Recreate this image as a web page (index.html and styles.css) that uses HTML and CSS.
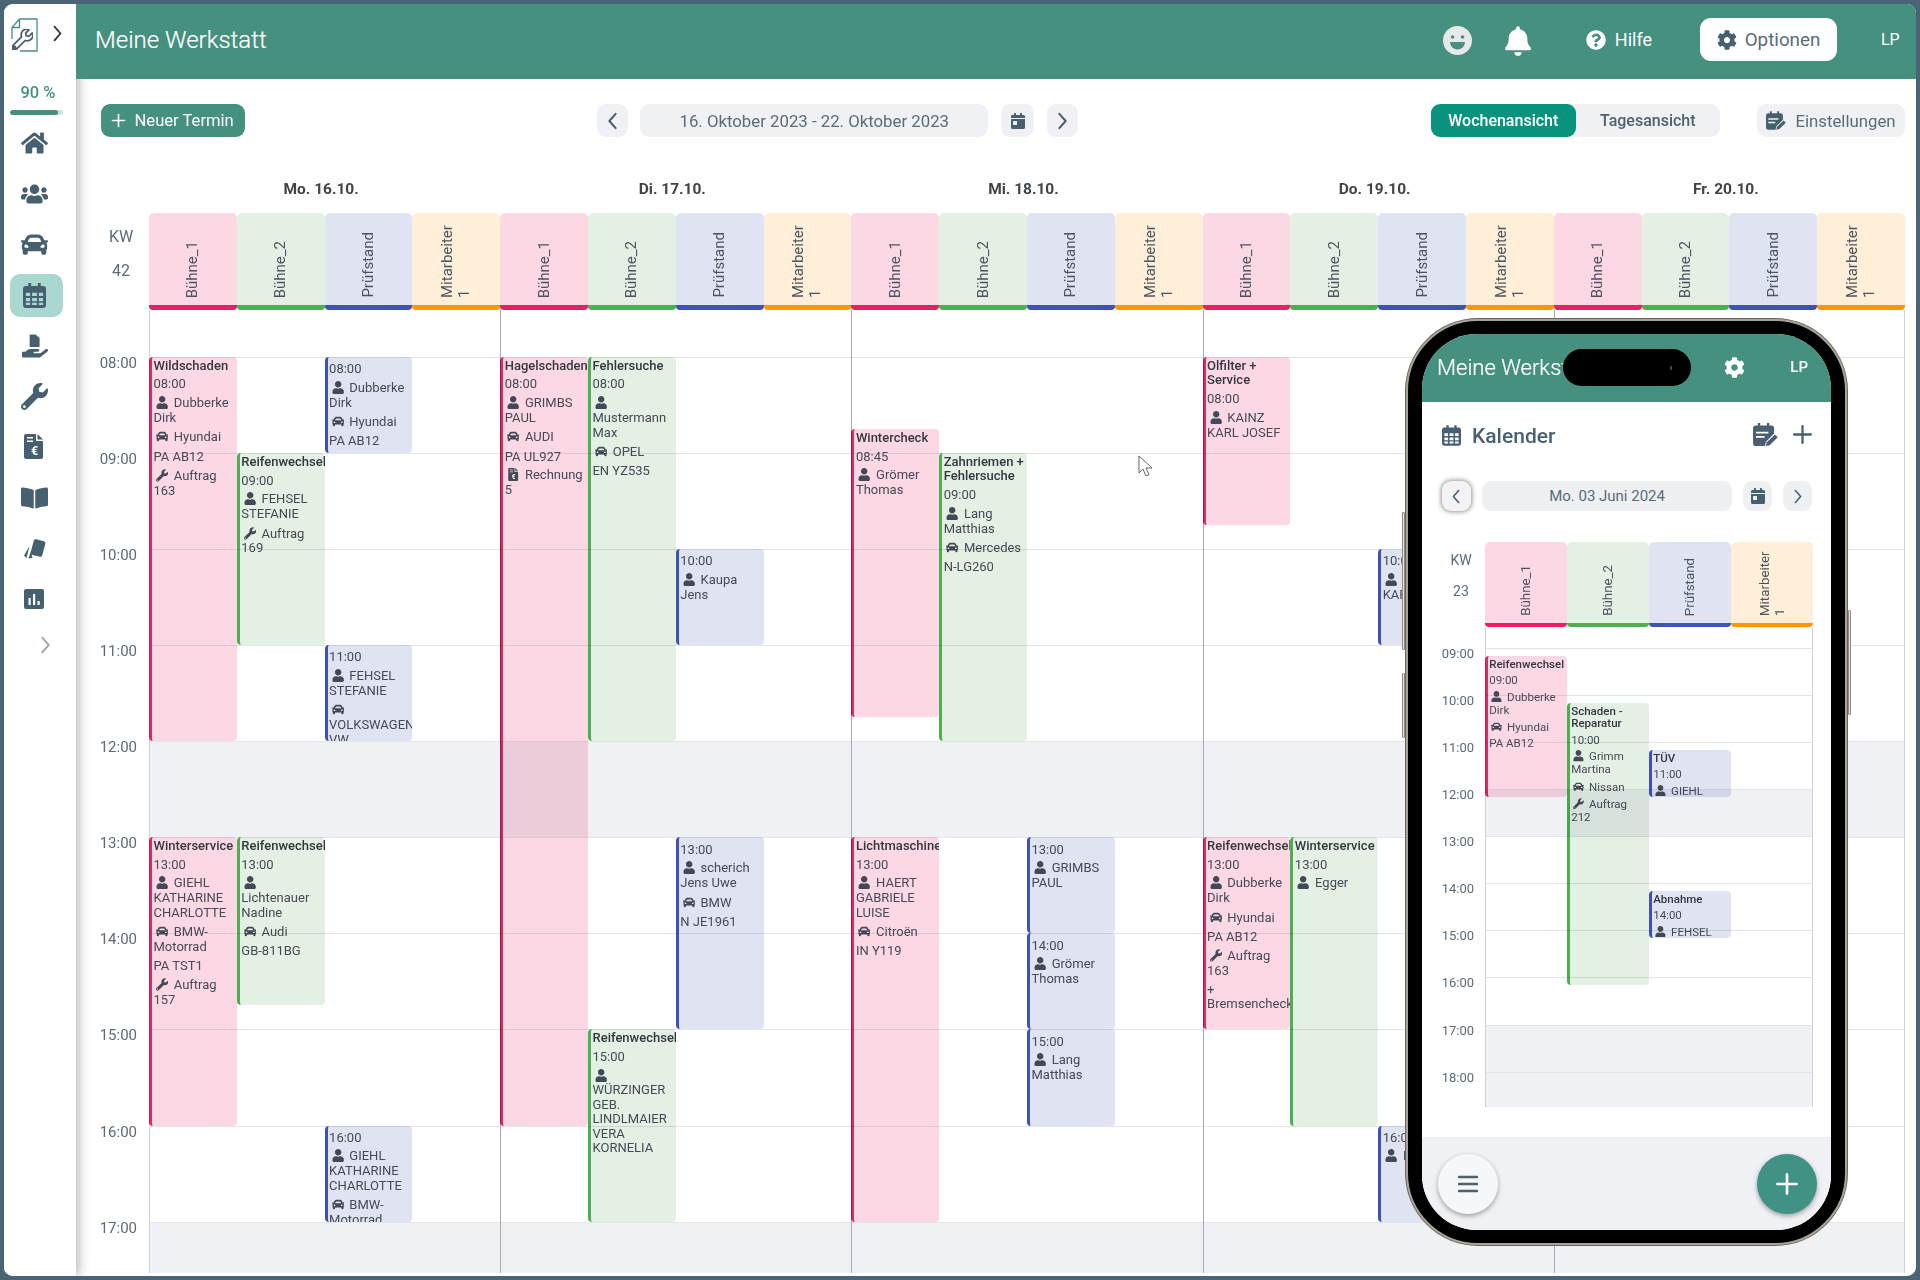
FILE: index.html
```html
<!DOCTYPE html>
<html lang="de">
<head>
<meta charset="utf-8">
<title>Meine Werkstatt</title>
<link rel="stylesheet" href="styles.css">
</head>
<body>
<svg class="sprite" aria-hidden="true">
  <symbol id="user" viewBox="0 0 448 512"><path d="M224 256c70.700 0 128-57.300 128-128S294.700 0 224 0 96 57.300 96 128s57.300 128 128 128zm89.600 32h-16.700c-22.200 10.200-46.900 16-72.900 16s-50.600-5.800-72.900-16h-16.700C60.200 288 0 348.200 0 422.400V464c0 26.500 21.500 48 48 48h352c26.500 0 48-21.500 48-48v-41.600c0-74.200-60.200-134.400-134.400-134.400z"/></symbol>
  <symbol id="car" viewBox="0 0 512 512"><path d="M499.990 176h-59.870l-16.640-41.600C406.380 91.630 365.570 64 319.500 64h-127c-46.060 0-86.880 27.630-103.990 70.400L71.870 176H12.010C4.200 176-1.530 183.340.37 190.910l6 24C7.700 220.250 12.500 224 18.010 224h20.070C24.650 235.730 16 252.780 16 272v48c0 16.120 6.160 30.670 16 41.930V416c0 17.670 14.330 32 32 32h32c17.670 0 32-14.330 32-32v-32h256v32c0 17.670 14.330 32 32 32h32c17.670 0 32-14.330 32-32v-54.070c9.840-11.250 16-25.800 16-41.930v-48c0-19.220-8.650-36.270-22.070-48H494c5.510 0 10.310-3.750 11.640-9.090l6-24c1.890-7.570-3.840-14.910-11.650-14.910zm-352.060-17.830c7.290-18.220 24.940-30.170 44.570-30.170h127c19.630 0 37.280 11.950 44.570 30.170L384 208H128l19.930-49.830zM96 319.800c-19.200 0-32-12.760-32-31.900S76.800 256 96 256s48 28.710 48 47.850-28.800 15.950-48 15.950zm320 0c-19.200 0-48 3.190-48-15.950S396.800 256 416 256s32 12.760 32 31.900-12.800 31.900-32 31.900z"/></symbol>
  <symbol id="wrench" viewBox="0 0 512 512"><path d="M507.730 109.100c-2.240-9.030-13.540-12.090-20.120-5.510l-74.360 74.360-67.880-11.310-11.310-67.880 74.360-74.360c6.620-6.620 3.430-17.900-5.660-20.160-47.380-11.740-99.550.91-136.580 37.930-39.640 39.640-50.550 97.100-34.050 147.200L18.740 402.760c-24.990 24.990-24.990 65.510 0 90.500 24.990 24.990 65.510 24.990 90.500 0l213.210-213.210c50.120 16.710 107.470 5.680 147.370-34.220 37.070-37.070 49.700-89.320 37.910-136.730zM64 472c-13.250 0-24-10.750-24-24 0-13.260 10.750-24 24-24s24 10.740 24 24c0 13.250-10.750 24-24 24z"/></symbol>
  <symbol id="home" viewBox="0 0 576 512"><path d="M280.370 148.260L96 300.110V464a16 16 0 0 0 16 16l112.060-.29a16 16 0 0 0 15.920-16V368a16 16 0 0 1 16-16h64a16 16 0 0 1 16 16v95.640a16 16 0 0 0 16 16.050L464 480a16 16 0 0 0 16-16V300L295.670 148.260a12.190 12.190 0 0 0-15.300 0zM571.600 251.470L488 182.560V44.050a12 12 0 0 0-12-12h-56a12 12 0 0 0-12 12v72.610L318.470 43a48 48 0 0 0-61 0L4.340 251.470a12 12 0 0 0-1.600 16.900l25.500 31A12 12 0 0 0 45.150 301l235.220-193.740a12.190 12.190 0 0 1 15.300 0L530.900 301a12 12 0 0 0 16.900-1.600l25.500-31a12 12 0 0 0-1.700-16.930z"/></symbol>
  <symbol id="users" viewBox="0 0 640 512"><path d="M96 224c35.300 0 64-28.700 64-64s-28.700-64-64-64-64 28.700-64 64 28.700 64 64 64zm448 0c35.300 0 64-28.700 64-64s-28.700-64-64-64-64 28.700-64 64 28.700 64 64 64zm32 32h-64c-17.600 0-33.500 7.100-45.100 18.600 40.300 22.100 68.900 62 75.100 109.400h66c17.700 0 32-14.300 32-32v-32c0-35.300-28.700-64-64-64zm-256 0c61.900 0 112-50.100 112-112S381.900 32 320 32 208 82.100 208 144s50.100 112 112 112zm76.800 32h-8.300c-20.800 10-43.900 16-68.500 16s-47.600-6-68.500-16h-8.300C179.600 288 128 339.600 128 403.200V432c0 26.500 21.500 48 48 48h288c26.500 0 48-21.500 48-48v-28.800c0-63.600-51.600-115.200-115.200-115.200zm-223.700-13.400C161.500 263.100 145.600 256 128 256H64c-35.300 0-64 28.700-64 64v32c0 17.700 14.300 32 32 32h65.900c6.300-47.400 34.900-87.300 75.200-109.400z"/></symbol>
  <symbol id="calendar" viewBox="0 0 24 26"><path fill-rule="evenodd" d="M5.500 0h3v3h7V0h3v3H21a3 3 0 0 1 3 3v17a3 3 0 0 1-3 3H3a3 3 0 0 1-3-3V6a3 3 0 0 1 3-3h2.500zM3 10v3.500h4.500V10zm6.500 0v3.500h5V10zm7 0v3.500H21V10zM3 15.500V19h4.500v-3.500zm6.500 0V19h5v-3.500zm7 0V19H21v-3.500zM3 20.500V23h4.500v-2.500zm6.500 0V23h5v-2.500zm7 0V23H21v-2.500z"/></symbol>
  <symbol id="calday" viewBox="0 0 448 512"><path d="M0 464c0 26.500 21.500 48 48 48h352c26.500 0 48-21.500 48-48V192H0v272zm64-192c0-8.800 7.200-16 16-16h96c8.800 0 16 7.200 16 16v96c0 8.800-7.200 16-16 16H80c-8.800 0-16-7.200-16-16v-96zM400 64h-48V16c0-8.800-7.200-16-16-16h-32c-8.800 0-16 7.200-16 16v48H160V16c0-8.800-7.200-16-16-16h-32c-8.800 0-16 7.200-16 16v48H48C21.500 64 0 85.500 0 112v48h448v-48c0-26.500-21.500-48-48-48z"/></symbol>
  <symbol id="calpen" viewBox="0 0 26 24"><path fill-rule="evenodd" d="M5 0h2.500v2.500h7V0H17v2.500h2a3 3 0 0 1 3 3V11l-8.500 8.500L12.300 24H3a3 3 0 0 1-3-3V5.500a3 3 0 0 1 3-3h2zM3 9v2h13V9zm0 4.500v2h9v-2z"/><path d="M23 12l2.800 2.800-8.500 8.300-4 .9 1-4z"/></symbol>
  <symbol id="hand" viewBox="0 0 576 512"><path d="M565.300 328.100c-11.800-10.700-30.200-10-42.600 0L430.300 402c-11.300 9.100-25.400 14-40 14H272c-8.800 0-16-7.200-16-16s7.200-16 16-16h78.300c15.900 0 30.700-10.900 33.300-26.600 3.300-20-12.100-37.400-31.600-37.400H192c-27 0-53.100 9.300-74.100 26.300L71.400 384H16c-8.800 0-16 7.200-16 16v96c0 8.800 7.200 16 16 16h356.800c14.500 0 28.600-4.900 40-14L564 377c15.200-12.100 16.400-35.300 1.300-48.900z"/><path d="M190 0h110l90 80v180a20 20 0 0 1-20 20H190a20 20 0 0 1-20-20V20a20 20 0 0 1 20-20z"/></symbol>
  <symbol id="invoice" viewBox="0 0 19 25"><path fill-rule="evenodd" d="M2 0h10v7h7v16a2 2 0 0 1-2 2H2a2 2 0 0 1-2-2V2a2 2 0 0 1 2-2zm1 3v1.500h6V3zm0 3.500V8h6V6.500z"/><path d="M13.500 0L19 5.500h-5.500z"/><text x="10.500" y="20.500" font-size="12.500" font-weight="700" fill="#fff" text-anchor="middle" font-family="Roboto, sans-serif">€</text></symbol>
  <symbol id="book" viewBox="0 0 576 512"><path d="M542.220 32.050c-54.800 3.110-163.720 14.430-230.960 55.590-4.640 2.840-7.270 7.890-7.270 13.170v363.870c0 11.550 12.630 18.850 23.280 13.490 69.180-34.820 169.230-44.320 218.700-46.920 16.890-.89 30.020-14.430 30.020-30.660V62.750c.01-17.710-15.350-31.740-33.770-30.700zM264.730 87.640C197.500 46.480 88.580 35.170 33.780 32.050 15.360 31.010 0 45.040 0 62.750V400.600c0 16.240 13.130 29.780 30.020 30.660 49.490 2.600 149.590 12.110 218.770 46.950 10.620 5.350 23.210-1.940 23.210-13.460V100.630c0-5.290-2.620-10.140-7.270-12.990z"/></symbol>
  <symbol id="tags" viewBox="0 0 24 22"><rect x="9" y="2" width="12" height="16" rx="2" transform="rotate(15 15 10)"/><path d="M6.500 8L1 17.500l2.500 2.500zM8 13l-2.500 7.500 4-.5z"/></symbol>
  <symbol id="chart" viewBox="0 0 20 20"><path fill-rule="evenodd" d="M2 0h16a2 2 0 0 1 2 2v16a2 2 0 0 1-2 2H2a2 2 0 0 1-2-2V2a2 2 0 0 1 2-2zm2.500 9v7h2.200V9zM9 5v11h2.200V5zm4.500 7v4h2.200v-4z"/></symbol>
  <symbol id="gear" viewBox="0 0 512 512"><path d="M487.400 315.700l-42.600-24.600c4.300-23.200 4.300-47 0-70.200l42.600-24.600c4.900-2.800 7.100-8.600 5.500-14-11.100-35.600-30-67.800-54.700-94.600-3.800-4.100-10-5.100-14.800-2.300L380.800 110c-17.900-15.400-38.500-27.300-60.800-35.100V25.800c0-5.600-3.900-10.500-9.400-11.700-36.700-8.200-74.300-7.800-109.200 0-5.500 1.200-9.400 6.100-9.400 11.700V75c-22.200 7.900-42.800 19.800-60.800 35.100L88.700 85.500c-4.900-2.800-11-1.900-14.800 2.300-24.700 26.700-43.600 58.900-54.700 94.600-1.700 5.400.6 11.200 5.500 14L67.300 221c-4.300 23.200-4.300 47 0 70.200l-42.600 24.600c-4.900 2.800-7.100 8.600-5.500 14 11.100 35.600 30 67.800 54.700 94.600 3.800 4.100 10 5.100 14.800 2.300l42.600-24.600c17.900 15.400 38.500 27.300 60.800 35.100v49.200c0 5.600 3.900 10.500 9.400 11.700 36.700 8.200 74.300 7.800 109.200 0 5.500-1.200 9.400-6.100 9.400-11.700v-49.200c22.200-7.900 42.800-19.800 60.800-35.100l42.600 24.600c4.900 2.800 11 1.900 14.800-2.300 24.700-26.700 43.600-58.900 54.700-94.600 1.500-5.500-.7-11.300-5.600-14.100zM256 336c-44.100 0-80-35.900-80-80s35.900-80 80-80 80 35.900 80 80-35.900 80-80 80z"/></symbol>
  <symbol id="bell" viewBox="0 0 448 512"><path d="M224 512c35.320 0 63.970-28.650 63.970-64H160.030c0 35.350 28.650 64 63.970 64zm215.390-149.710c-19.320-20.760-55.470-51.990-55.470-154.290 0-77.700-54.480-139.900-127.940-155.160V32c0-17.670-14.320-32-31.980-32s-31.980 14.330-31.980 32v20.840C118.560 68.100 64.080 130.300 64.080 208c0 102.300-36.150 133.530-55.470 154.290-6 6.450-8.660 14.160-8.610 21.710.11 16.400 12.980 32 32.100 32h383.800c19.120 0 32-15.600 32.100-32 .05-7.550-2.610-15.270-8.610-21.710z"/></symbol>
  <symbol id="help" viewBox="0 0 512 512"><path d="M504 256c0 136.997-111.043 248-248 248S8 392.997 8 256C8 119.083 119.043 8 256 8s248 111.083 248 248zM262.655 90c-54.497 0-89.255 22.957-116.549 63.758-3.536 5.286-2.353 12.415 2.715 16.258l34.699 26.310c5.205 3.947 12.621 3.008 16.665-2.122 17.864-22.658 30.113-35.797 57.303-35.797 20.429 0 45.698 13.148 45.698 32.958 0 14.976-12.363 22.667-32.534 33.976C247.128 238.528 216 254.941 216 296v4c0 6.627 5.373 12 12 12h56c6.627 0 12-5.373 12-12v-1.333c0-28.462 83.186-29.647 83.186-106.667 0-58.002-60.165-102-116.531-102zM256 338c-25.365 0-46 20.635-46 46 0 25.364 20.635 46 46 46s46-20.636 46-46c0-25.365-20.635-46-46-46z"/></symbol>
  <symbol id="left" viewBox="0 0 12 20"><path d="M9.500 2L2.500 10l7 8" fill="none" stroke="currentColor" stroke-width="2.200" stroke-linecap="round" stroke-linejoin="round"/></symbol>
  <symbol id="right" viewBox="0 0 12 20"><path d="M2.500 2l7 8-7 8" fill="none" stroke="currentColor" stroke-width="2.200" stroke-linecap="round" stroke-linejoin="round"/></symbol>
  <symbol id="plus" viewBox="0 0 20 20"><path d="M10 2v16M2 10h16" fill="none" stroke="currentColor" stroke-width="2.200" stroke-linecap="round"/></symbol>
</svg>

<div class="app">
  <aside class="sidebar">
    <div class="brand">
      <svg class="logo" viewBox="0 0 27 34">
        <path d="M8.500 1H26v32H9M8.500 1L1 9.500V21M8.500 1v8.500H1" fill="none" stroke="#45907f" stroke-width="1.300"/>
        <use href="#wrench" x="1" y="11" width="21" height="21" class="logo-wrench"/>
      </svg>
      <svg class="brand-chev"><use href="#right"/></svg>
    </div>
    <div class="progress-label">90 %</div>
    <div class="progress"><div class="progress-fill"></div></div>
    <nav class="side-nav">
      <a class="side-item"><svg class="s-home"><use href="#home"/></svg></a>
      <a class="side-item"><svg class="s-users"><use href="#users"/></svg></a>
      <a class="side-item"><svg class="s-car"><use href="#car"/></svg></a>
      <a class="side-item active"><svg class="s-cal"><use href="#calendar"/></svg></a>
      <a class="side-item"><svg class="s-hand"><use href="#hand"/></svg></a>
      <a class="side-item"><svg class="s-wrench"><use href="#wrench"/></svg></a>
      <a class="side-item"><svg class="s-invoice"><use href="#invoice"/></svg></a>
      <a class="side-item"><svg class="s-book"><use href="#book"/></svg></a>
      <a class="side-item"><svg class="s-tags"><use href="#tags"/></svg></a>
      <a class="side-item"><svg class="s-chart"><use href="#chart"/></svg></a>
      <a class="side-item side-more"><svg class="s-more"><use href="#right"/></svg></a>
    </nav>
  </aside>

  <main class="main">
    <header class="topbar">
      <h1 class="title">Meine Werkstatt</h1>
      <svg class="smiley" viewBox="0 0 29 29">
        <circle cx="14.500" cy="14.500" r="14.500" fill="#e6e8ea"/>
        <circle cx="9.500" cy="11" r="1.800" fill="#45907f"/>
        <circle cx="19.500" cy="11" r="1.800" fill="#45907f"/>
        <path d="M7 16h15a7.500 7.500 0 0 1-15 0z" fill="#45907f"/>
      </svg>
      <svg class="bell"><use href="#bell"/></svg>
      <a class="help"><svg class="help-ic"><use href="#help"/></svg>Hilfe</a>
      <button class="options"><svg class="options-ic"><use href="#gear"/></svg>Optionen</button>
      <span class="initials">LP</span>
    </header>

    <div class="content">
      <div class="toolbar">
        <button class="btn-new"><svg class="plus-ic"><use href="#plus"/></svg>Neuer Termin</button>
        <div class="range">
          <button class="tool-btn nav"><svg class="chev"><use href="#left"/></svg></button>
          <div class="tool-btn date">16. Oktober 2023 - 22. Oktober 2023</div>
          <button class="tool-btn cal"><svg class="cal-ic"><use href="#calday"/></svg></button>
          <button class="tool-btn nav"><svg class="chev"><use href="#right"/></svg></button>
        </div>
        <div class="views">
          <div class="toggle">
            <button class="toggle-item on">Wochenansicht</button>
            <button class="toggle-item">Tagesansicht</button>
          </div>
          <button class="tool-btn settings"><svg class="pen-ic"><use href="#calpen"/></svg>Einstellungen</button>
        </div>
      </div>

      <div class="days">
        <div>Mo. 16.10.</div><div>Di. 17.10.</div><div>Mi. 18.10.</div><div>Do. 19.10.</div><div>Fr. 20.10.</div>
      </div>

      <div class="res-row">
        <div class="kw"><span>KW</span><span>42</span></div>
        <div class="res pink"><span>Bühne_1</span></div><div class="res green"><span>Bühne_2</span></div><div class="res blue"><span>Prüfstand</span></div><div class="res orange"><span>Mitarbeiter 1</span></div>
        <div class="res pink"><span>Bühne_1</span></div><div class="res green"><span>Bühne_2</span></div><div class="res blue"><span>Prüfstand</span></div><div class="res orange"><span>Mitarbeiter 1</span></div>
        <div class="res pink"><span>Bühne_1</span></div><div class="res green"><span>Bühne_2</span></div><div class="res blue"><span>Prüfstand</span></div><div class="res orange"><span>Mitarbeiter 1</span></div>
        <div class="res pink"><span>Bühne_1</span></div><div class="res green"><span>Bühne_2</span></div><div class="res blue"><span>Prüfstand</span></div><div class="res orange"><span>Mitarbeiter 1</span></div>
        <div class="res pink"><span>Bühne_1</span></div><div class="res green"><span>Bühne_2</span></div><div class="res blue"><span>Prüfstand</span></div><div class="res orange"><span>Mitarbeiter 1</span></div>
      </div>

      <div class="week">
        <div class="band" style="grid-row:18/22"></div>
        <div class="band" style="grid-row:38/39"></div>
        <div class="hour" style="grid-row:2"><span>08:00</span><i></i></div>
        <div class="hour" style="grid-row:6"><span>09:00</span><i></i></div>
        <div class="hour" style="grid-row:10"><span>10:00</span><i></i></div>
        <div class="hour" style="grid-row:14"><span>11:00</span><i></i></div>
        <div class="hour" style="grid-row:18"><span>12:00</span><i></i></div>
        <div class="hour" style="grid-row:22"><span>13:00</span><i></i></div>
        <div class="hour" style="grid-row:26"><span>14:00</span><i></i></div>
        <div class="hour" style="grid-row:30"><span>15:00</span><i></i></div>
        <div class="hour" style="grid-row:34"><span>16:00</span><i></i></div>
        <div class="hour" style="grid-row:38"><span>17:00</span><i></i></div>
        <div class="vline edge" style="grid-column:2"></div>
        <div class="vline" style="grid-column:6"></div>
        <div class="vline" style="grid-column:10"></div>
        <div class="vline" style="grid-column:14"></div>
        <div class="vline" style="grid-column:18"></div>
        <div class="vline edge last" style="grid-column:21"></div>

        <article class="ev e-pink" style="grid-column:2;grid-row:2/18"><h3>Wildschaden</h3><p>08:00</p><p><svg class="ic"><use href="#user"/></svg> Dubberke Dirk</p><p class="v"><svg class="ic"><use href="#car"/></svg> Hyundai</p><p>PA AB12</p><p class="v"><svg class="ic"><use href="#wrench"/></svg> Auftrag 163</p></article>
        <article class="ev e-pink" style="grid-column:2;grid-row:22/34"><h3>Winterservice</h3><p>13:00</p><p><svg class="ic"><use href="#user"/></svg> GIEHL KATHARINE CHARLOTTE</p><p class="v"><svg class="ic"><use href="#car"/></svg> BMW-Motorrad</p><p>PA TST1</p><p class="v"><svg class="ic"><use href="#wrench"/></svg> Auftrag 157</p></article>
        <article class="ev e-green" style="grid-column:3;grid-row:6/14"><h3>Reifenwechsel</h3><p>09:00</p><p><svg class="ic"><use href="#user"/></svg> FEHSEL STEFANIE</p><p class="v"><svg class="ic"><use href="#wrench"/></svg> Auftrag 169</p></article>
        <article class="ev e-green" style="grid-column:3;grid-row:22/29"><h3>Reifenwechsel</h3><p>13:00</p><p><svg class="ic"><use href="#user"/></svg> Lichtenauer Nadine</p><p class="v"><svg class="ic"><use href="#car"/></svg> Audi</p><p>GB-811BG</p></article>
        <article class="ev e-blue plain" style="grid-column:4;grid-row:2/6"><p>08:00</p><p><svg class="ic"><use href="#user"/></svg> Dubberke Dirk</p><p class="v"><svg class="ic"><use href="#car"/></svg> Hyundai</p><p>PA AB12</p></article>
        <article class="ev e-blue plain" style="grid-column:4;grid-row:14/18"><p>11:00</p><p><svg class="ic"><use href="#user"/></svg> FEHSEL STEFANIE</p><p class="v"><svg class="ic"><use href="#car"/></svg> VOLKSWAGEN VW</p></article>
        <article class="ev e-blue plain" style="grid-column:4;grid-row:34/38"><p>16:00</p><p><svg class="ic"><use href="#user"/></svg> GIEHL KATHARINE CHARLOTTE</p><p class="v"><svg class="ic"><use href="#car"/></svg> BMW-Motorrad</p></article>

        <article class="ev e-pink" style="grid-column:6;grid-row:2/34"><h3>Hagelschaden</h3><p>08:00</p><p><svg class="ic"><use href="#user"/></svg> GRIMBS PAUL</p><p class="v"><svg class="ic"><use href="#car"/></svg> AUDI</p><p>PA UL927</p><p><svg class="ic"><use href="#invoice"/></svg> Rechnung 5</p></article>
        <article class="ev e-green" style="grid-column:7;grid-row:2/18"><h3>Fehlersuche</h3><p>08:00</p><p><svg class="ic"><use href="#user"/></svg> Mustermann Max</p><p class="v"><svg class="ic"><use href="#car"/></svg> OPEL</p><p>EN YZ535</p></article>
        <article class="ev e-green" style="grid-column:7;grid-row:30/38"><h3>Reifenwechsel</h3><p>15:00</p><p><svg class="ic"><use href="#user"/></svg> WÜRZINGER GEB. LINDLMAIER VERA KORNELIA</p></article>
        <article class="ev e-blue plain" style="grid-column:8;grid-row:10/14"><p>10:00</p><p><svg class="ic"><use href="#user"/></svg> Kaupa Jens</p></article>
        <article class="ev e-blue plain" style="grid-column:8;grid-row:22/30"><p>13:00</p><p><svg class="ic"><use href="#user"/></svg> scherich Jens Uwe</p><p class="v"><svg class="ic"><use href="#car"/></svg> BMW</p><p>N JE1961</p></article>

        <article class="ev e-pink" style="grid-column:10;grid-row:5/17"><h3>Wintercheck</h3><p>08:45</p><p><svg class="ic"><use href="#user"/></svg> Grömer Thomas</p></article>
        <article class="ev e-pink" style="grid-column:10;grid-row:22/38"><h3>Lichtmaschine</h3><p>13:00</p><p><svg class="ic"><use href="#user"/></svg> HAERT GABRIELE LUISE</p><p class="v"><svg class="ic"><use href="#car"/></svg> Citroën</p><p>IN Y119</p></article>
        <article class="ev e-green" style="grid-column:11;grid-row:6/18"><h3>Zahnriemen + Fehlersuche</h3><p>09:00</p><p><svg class="ic"><use href="#user"/></svg> Lang Matthias</p><p class="v"><svg class="ic"><use href="#car"/></svg> Mercedes</p><p>N-LG260</p></article>
        <article class="ev e-blue plain" style="grid-column:12;grid-row:22/26"><p>13:00</p><p><svg class="ic"><use href="#user"/></svg> GRIMBS PAUL</p></article>
        <article class="ev e-blue plain" style="grid-column:12;grid-row:26/30"><p>14:00</p><p><svg class="ic"><use href="#user"/></svg> Grömer Thomas</p></article>
        <article class="ev e-blue plain" style="grid-column:12;grid-row:30/34"><p>15:00</p><p><svg class="ic"><use href="#user"/></svg> Lang Matthias</p></article>

        <article class="ev e-pink" style="grid-column:14;grid-row:2/9"><h3>Olfilter + Service</h3><p>08:00</p><p><svg class="ic"><use href="#user"/></svg> KAINZ KARL JOSEF</p></article>
        <article class="ev e-pink" style="grid-column:14;grid-row:22/30"><h3>Reifenwechsel</h3><p>13:00</p><p><svg class="ic"><use href="#user"/></svg> Dubberke Dirk</p><p class="v"><svg class="ic"><use href="#car"/></svg> Hyundai</p><p>PA AB12</p><p class="v"><svg class="ic"><use href="#wrench"/></svg> Auftrag 163</p><p>+ Bremsencheck</p></article>
        <article class="ev e-green" style="grid-column:15;grid-row:22/34"><h3>Winterservice</h3><p>13:00</p><p><svg class="ic"><use href="#user"/></svg> Egger</p></article>
        <article class="ev e-blue plain" style="grid-column:16;grid-row:10/14"><p>10:00</p><p><svg class="ic"><use href="#user"/></svg> KAINZ KARL JOSEF</p></article>
        <article class="ev e-blue plain" style="grid-column:16;grid-row:34/38"><p>16:00</p><p><svg class="ic"><use href="#user"/></svg> Egger</p></article>
      </div>
    </div>
  </main>

  <svg class="cursor" viewBox="0 0 15 23"><path d="M1 1v17l4-4 3 7 3-1.300-3-6.700h6z" fill="#fff" stroke="#666" stroke-width="1"/></svg>

  <section class="phone">
    <i class="phone-key k1"></i><i class="phone-key k2"></i><i class="phone-key k3"></i>
    <div class="screen">
      <div class="island"><i></i></div>
      <header class="m-top">
        <span class="m-title">Meine Werkstatt</span>
        <svg class="m-gear"><use href="#gear"/></svg>
        <span class="m-lp">LP</span>
      </header>
      <div class="m-head">
        <svg class="m-cal"><use href="#calendar"/></svg>
        <h2>Kalender</h2>
        <svg class="m-pen"><use href="#calpen"/></svg>
        <svg class="m-plus"><use href="#plus"/></svg>
      </div>
      <div class="m-nav">
        <button class="m-btn focus"><svg class="m-chev"><use href="#left"/></svg></button>
        <div class="m-btn m-date">Mo. 03 Juni 2024</div>
        <button class="m-btn"><svg class="m-day"><use href="#calday"/></svg></button>
        <button class="m-btn"><svg class="m-chev"><use href="#right"/></svg></button>
      </div>
      <div class="m-res-row">
        <div class="kw m-kw"><span>KW</span><span>23</span></div>
        <div class="res pink"><span>Bühne_1</span></div><div class="res green"><span>Bühne_2</span></div><div class="res blue"><span>Prüfstand</span></div><div class="res orange"><span>Mitarbeiter 1</span></div>
      </div>
      <div class="m-grid">
        <div class="band" style="grid-row:14/18"></div>
        <div class="band" style="grid-row:34/39"></div>
        <div class="hour" style="grid-row:2"><span>09:00</span><i></i></div>
        <div class="hour" style="grid-row:6"><span>10:00</span><i></i></div>
        <div class="hour" style="grid-row:10"><span>11:00</span><i></i></div>
        <div class="hour" style="grid-row:14"><span>12:00</span><i></i></div>
        <div class="hour" style="grid-row:18"><span>13:00</span><i></i></div>
        <div class="hour" style="grid-row:22"><span>14:00</span><i></i></div>
        <div class="hour" style="grid-row:26"><span>15:00</span><i></i></div>
        <div class="hour" style="grid-row:30"><span>16:00</span><i></i></div>
        <div class="hour" style="grid-row:34"><span>17:00</span><i></i></div>
        <div class="hour" style="grid-row:38"><span>18:00</span><i></i></div>
        <div class="vline edge" style="grid-column:2"></div>
        <div class="vline edge last" style="grid-column:5"></div>
        <article class="ev e-pink" style="grid-column:2;grid-row:2/14"><h3>Reifenwechsel</h3><p>09:00</p><p><svg class="ic"><use href="#user"/></svg> Dubberke Dirk</p><p class="v"><svg class="ic"><use href="#car"/></svg> Hyundai</p><p>PA AB12</p></article>
        <article class="ev e-green" style="grid-column:3;grid-row:6/30"><h3>Schaden - Reparatur</h3><p>10:00</p><p><svg class="ic"><use href="#user"/></svg> Grimm Martina</p><p class="v"><svg class="ic"><use href="#car"/></svg> Nissan</p><p class="v"><svg class="ic"><use href="#wrench"/></svg> Auftrag 212</p></article>
        <article class="ev e-blue" style="grid-column:4;grid-row:10/14"><h3>TÜV</h3><p>11:00</p><p><svg class="ic"><use href="#user"/></svg> GIEHL</p></article>
        <article class="ev e-blue" style="grid-column:4;grid-row:22/26"><h3>Abnahme</h3><p>14:00</p><p><svg class="ic"><use href="#user"/></svg> FEHSEL</p></article>
      </div>
      <footer class="m-foot">
        <button class="fab menu"><svg class="m-burger" viewBox="0 0 20 18"><path d="M1 2h18M1 9h18M1 16h18" stroke="currentColor" stroke-width="2.600" stroke-linecap="round"/></svg></button>
        <button class="fab add"><svg class="m-add"><use href="#plus"/></svg></button>
      </footer>
    </div>
  </section>
</div>
</body>
</html>
```
FILE: styles.css
```css
* { box-sizing: border-box; }
html, body { margin: 0; height: 1280px; overflow: hidden; }
body { background: #4a6375; font-family: Roboto, "Liberation Sans", sans-serif; color: #5a6b7a; padding: 4px; }
button { font-family: inherit; border: 0; padding: 0; cursor: pointer; }
h1, h2, h3, p { margin: 0; font-weight: inherit; font-size: inherit; }
.sprite { display: none; }
svg { fill: currentColor; display: block; }

.app { position: relative; width: 1912px; height: 1272px; display: flex; background: #fff; border-radius: 9px; overflow: hidden; }

/* sidebar */
.sidebar { position: relative; z-index: 1; width: 72px; flex: none; background: #fff; box-shadow: 3px 0 10px rgba(0,0,0,.28); color: #47606f; }
.brand { display: flex; align-items: center; padding: 14px 0 0 7px; height: 48px; }
.logo { width: 27px; height: 34px; }
.logo-wrench { fill: #fff; stroke: #47606f; stroke-width: 44px; }
.brand-chev { width: 11px; height: 17px; margin: 0 0 4px 14px; color: #33373f; }
.progress-label { margin-top: 31px; padding-right: 4px; height: 20px; line-height: 20px; text-align: center; font-size: 16.500px; font-weight: 500; color: #45907f; }
.progress { margin: 7px 0 0 6px; width: 53px; height: 5px; background: #cfe6e0; border-radius: 3px; overflow: hidden; }
.progress-fill { width: 90%; height: 100%; background: #45907f; border-radius: 3px; }
.side-nav { margin-top: 3px; }
.side-item { height: 50.600px; width: 53px; margin-left: 6px; padding-right: 4px; display: flex; align-items: center; justify-content: center; border-radius: 10px; position: relative; }
.side-item.active { background: #a9d8d0; height: 43px; margin: 3.800px 0 3.800px 6px; }
.s-home { width: 27px; height: 24px; }
.s-users { width: 27px; height: 22px; }
.s-car { width: 27px; height: 27px; }
.s-cal { width: 23px; height: 25px; }
.s-hand { width: 26px; height: 24px; }
.s-wrench { width: 27px; height: 27px; }
.s-invoice { width: 19px; height: 25px; margin-right: 3px; }
.s-book { width: 27px; height: 24px; margin-top: 2px; }
.s-tags { width: 24px; height: 22px; margin-top: 1px; }
.s-chart { width: 20px; height: 20px; margin-right: 1px; }
.side-more { padding: 0 0 0 17px; color: #a2aab1; margin-top: -4px; }
.s-more { width: 11px; height: 20px; }

/* main */
.main { flex: 1; min-width: 0; display: flex; flex-direction: column; }
.topbar { position: relative; z-index: 2; height: 75px; flex: none; background: #45907f; color: #fff; display: flex; align-items: center; padding: 0 16px 0 19px; }
.title { font-size: 24px; font-weight: 300; margin-right: auto; margin-top: -4px; -webkit-text-stroke: .2px #fff; }
.smiley { width: 29px; height: 29px; margin-top: -3px; }
.bell { width: 26px; height: 30px; margin: -2px 0 0 33px; }
.help { display: flex; align-items: center; margin-left: 55px; font-size: 18px; font-weight: 400; gap: 9px; margin-top: -4px; }
.help-ic { width: 20px; height: 20px; }
.options { margin-left: 48px; width: 137px; height: 43px; margin-top: -4px; background: #fff; color: #5a6b7a; border-radius: 11px; display: flex; align-items: center; justify-content: center; gap: 8px; font-size: 18.800px; }
.options-ic { width: 20px; height: 20px; color: #47606f; }
.initials { margin-left: 44px; font-size: 16px; width: 19px; margin-top: -4px; }

.content { padding: 25px 11px 0 0; flex: 1; min-height: 0; }
.toolbar { display: flex; justify-content: space-between; height: 33px; padding-left: 24.500px; }
.btn-new { width: 144px; height: 33px; background: #45907f; color: #fff; border-radius: 9px; display: flex; align-items: center; gap: 9px; padding-left: 10px; font-size: 16.600px; }
.plus-ic { width: 15px; height: 15px; }
.range, .views { display: flex; }
.tool-btn { height: 33px; border-radius: 9px; background: #eff1f5; color: #5a6b7a; display: flex; align-items: center; justify-content: center; font-size: 16.800px; }
.nav { width: 31px; }
.chev { width: 11px; height: 18px; color: #47606f; }
.date { width: 348px; margin: 0 13px 0 12px; }
.cal { width: 33px; margin-right: 13px; }
.cal-ic { width: 14px; height: 16px; color: #47606f; }
.toggle { display: flex; width: 289px; height: 33px; background: #eff1f5; border-radius: 9px; }
.toggle-item { flex: 1; height: 33px; background: none; border-radius: 9px; font-size: 16px; font-weight: 500; color: #4f6070; }
.toggle-item.on { background: #09937f; color: #fff; }
.settings { width: 148px; margin-left: 37px; gap: 9px; }
.pen-ic { width: 20px; height: 19px; color: #47606f; }

.days { display: grid; grid-template-columns: repeat(5, 351.200px); margin: 41px 0 0 73px; height: 35px; line-height: 22px; font-size: 15.500px; font-weight: 700; color: #3f4448; }
.days div { text-align: center; padding-right: 7px; }

.res-row { display: grid; grid-template-columns: 73px repeat(20, 87.800px); height: 97px; }
.kw { padding: 14px 0 0 17px; display: flex; flex-direction: column; align-items: center; gap: 14px; font-size: 16px; line-height: 20px; }
.res { display: flex; justify-content: center; align-items: flex-end; padding-bottom: 7px; border-bottom: 5px solid; border-radius: 5px 5px 4px 4px; color: #4a5560; font-size: 15px; }
.res span { writing-mode: vertical-rl; transform: rotate(180deg); max-height: 74px; line-height: 17px; }
.pink { background: #fcd8e4; border-color: #e91e63; }
.green { background: #e3f0e4; border-color: #4caf50; }
.blue { background: #dfe3f2; border-color: #3f51b5; }
.orange { background: #ffeed8; border-color: #ff9800; }

/* time grids */
.week { display: grid; grid-template-columns: 73px repeat(20, 87.800px); grid-template-rows: 47px repeat(36, 24.030px) 51px; }
.band { grid-column: 2 / -1; background: #eff1f5; }
.hour { grid-column: 1 / -1; display: flex; min-height: 0; }
.hour span { flex: none; width: 73px; padding-right: 12px; text-align: right; font-size: 15px; line-height: 15px; margin-top: -1px; height: 14px; }
.hour i { flex: 1; border-top: 1px solid #e3e5e9; }
.vline { grid-row: 1 / -1; border-left: 1px solid #a9abb0; }
.vline.edge { border-left-color: #d0d2d6; }
.vline.last { border-left: 0; border-right: 1px solid #d0d2d6; }
.ev { min-width: 0; min-height: 0; overflow: hidden; mix-blend-mode: multiply; border-left: 3px solid; border-radius: 4px; padding: .14em 2px 0 1.500px; font-size: 13px; line-height: 1.115; color: #454a56; }
.ev.plain { padding-top: .4em; }
.ev h3 { font-weight: 500; color: #33373f; }
.ev p { margin-top: .32em; }
.ev.plain p:first-child { margin-top: 0; }
.ev .v { margin-top: .38em; }
.ic { display: inline-block; width: .95em; height: 1em; margin: 0 .16em 0 .2em; vertical-align: -.12em; color: #434a57; }
.e-pink { background: #fcd8e4; border-color: #de2a6a; }
.e-green { background: #e3f0e4; border-color: #4caf50; }
.e-blue { background: #dfe3f2; border-color: #3f51b5; }

.cursor { position: absolute; left: 1134px; top: 451px; width: 15px; height: 23px; z-index: 3; }

/* phone */
.phone { position: absolute; z-index: 4; left: 1402px; top: 315px; width: 441px; height: 926px; padding: 13px 14px; background: #000; border: 2px solid #a7a398; border-radius: 72px; box-shadow: 0 0 0 1px #6b675e; }
.phone-key { position: absolute; width: 3px; background: #e6e4dd; border: 1px solid #8f8b80; border-radius: 1px; }
.k1 { left: -6px; top: 191px; height: 138px; }
.k2 { left: -6px; top: 352px; height: 65px; }
.k3 { right: -6px; top: 289px; height: 105px; }
.screen { position: relative; height: 100%; background: #fff; border-radius: 55px; overflow: hidden; display: flex; flex-direction: column; color: #5a6b7a; }
.island { position: absolute; z-index: 2; left: 141px; top: 15px; width: 128px; height: 37px; background: #000; border-radius: 19px; }
.island i { position: absolute; right: 19px; top: 17px; width: 2px; height: 4px; background: #444; }
.m-top { height: 68px; flex: none; background: #45907f; color: #fff; display: flex; align-items: center; padding: 0 23px 2px 15px; }
.m-title { width: 126px; white-space: nowrap; overflow: hidden; font-size: 22px; font-weight: 300; -webkit-text-stroke: .2px #fff; margin-right: auto; }
.m-gear { width: 21px; height: 21px; margin-right: 45px; margin-top: 1px; }
.m-lp { font-size: 15px; font-weight: 500; }
.m-head { display: flex; align-items: center; height: 45px; margin-top: 11px; padding: 0 18px 0 20px; color: #4a6072; }
.m-cal { width: 19px; height: 21px; }
.m-head h2 { font-size: 21px; font-weight: 500; margin: 0 auto 0 11px; }
.m-pen { width: 25px; height: 23px; margin-bottom: 2px; }
.m-plus { width: 21px; height: 21px; margin: 0 0 2px 14px; }
.m-nav { display: flex; margin-top: 23px; padding: 0 19px 0 20px; gap: 11px; }
.m-btn { width: 29px; height: 30px; background: #eff0f2; border-radius: 9px; display: flex; align-items: center; justify-content: center; color: #5a6b7a; font-size: 15px; }
.m-btn.focus { box-shadow: 0 0 4px 1px rgba(60,60,60,.55); background: #f3f3f4; }
.m-date { width: 251px; }
.m-chev { width: 10px; height: 15px; color: #47606f; }
.m-day { width: 14px; height: 16px; color: #47606f; }
.m-res-row { display: grid; grid-template-columns: 62.700px repeat(4, 82px); height: 85px; margin-top: 31px; }
.m-kw { padding: 9px 0 0 15.300px; gap: 13px; font-size: 14px; line-height: 18px; }
.m-res-row .res { font-size: 13.300px; border-bottom-width: 4px; }
.m-res-row .res span { max-height: 66px; line-height: 15px; }
.m-grid { display: grid; grid-template-columns: 62.700px repeat(4, 82px); grid-template-rows: 21px repeat(36, 11.770px) 35px; }
.m-grid .hour span { width: 62.700px; padding-right: 10.700px; font-size: 13px; line-height: 13px; }
.m-grid .ev { font-size: 11.500px; margin: 8px 0 -8px; }
.m-foot { margin-top: auto; height: 93px; flex: none; background: #eff1f5; display: flex; justify-content: space-between; padding: 17px 14px 0 16px; }
.fab { width: 60px; height: 60px; border-radius: 50%; display: flex; align-items: center; justify-content: center; box-shadow: 0 2px 5px rgba(0,0,0,.35); }
.menu { background: #f6f7f9; color: #4f6070; }
.m-burger { width: 20px; height: 18px; fill: none; }
.add { background: #3f9284; color: #fff; }
.m-add { width: 24px; height: 24px; }
```
